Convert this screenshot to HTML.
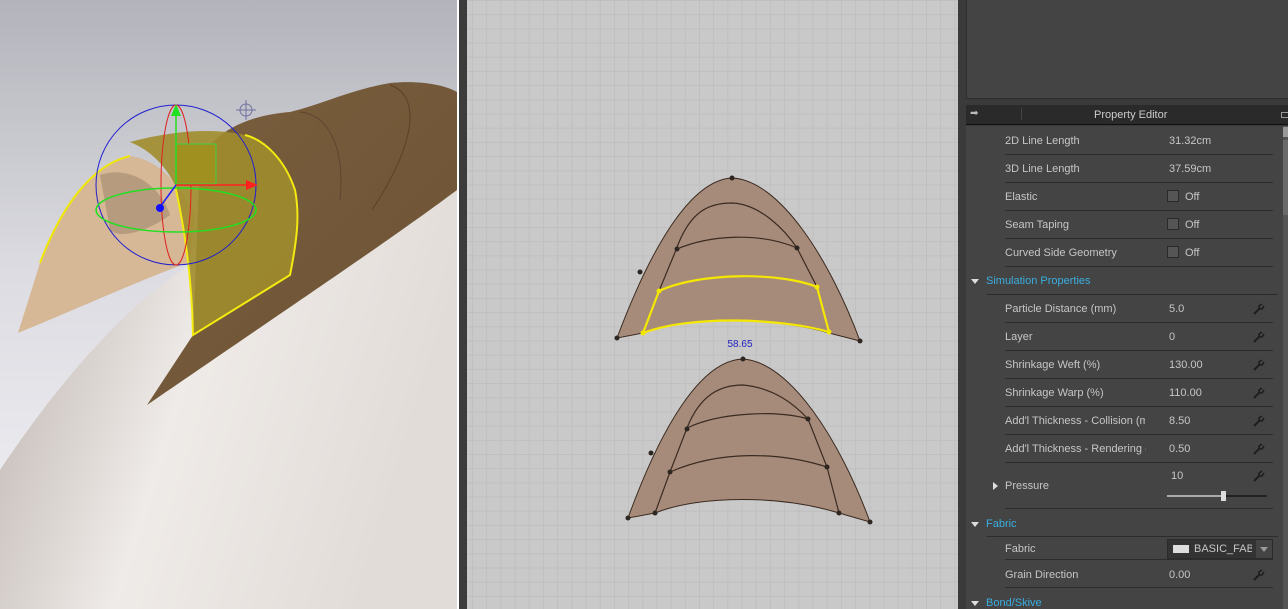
<!DOCTYPE html>
<html><head><meta charset="utf-8"><style>
*{margin:0;padding:0;box-sizing:border-box}
body{width:1288px;height:609px;overflow:hidden;background:#3a3a3a;position:relative;font-family:"Liberation Sans",Tahoma,sans-serif}
.abs{position:absolute}
#v3d{left:0;top:0;width:457px;height:609px}
#grid{left:467px;top:0;width:491px;height:609px;background-color:#c9c9c9;
background-image:linear-gradient(#bfbfbf 1px,transparent 1px),linear-gradient(90deg,#bfbfbf 1px,transparent 1px);background-size:14.2px 14.2px;background-position:5px 0}
.t{position:absolute;font-size:11px;color:#c6c6c6;white-space:nowrap}
.sep{position:absolute;height:1px;background:#2c2c2c}
.cb{position:absolute;width:12px;height:12px;border:1px solid #2a2a2a;background:#555}
.hd{position:absolute;font-size:11px;color:#3aaee0}
.tri{position:absolute;width:0;height:0;border-left:4px solid transparent;border-right:4px solid transparent;border-top:5px solid #ddd}
.w{position:absolute;width:12px;height:12px}
</style></head><body>
<svg width="0" height="0" style="position:absolute"><defs><symbol id="wr" viewBox="0 0 12 12"><path d="M1,11 L7,5" stroke="#1e1e1e" stroke-width="2"/><path d="M6,6 L6,3 L9,1 M6,6 L9,6 L11,3" stroke="#1e1e1e" stroke-width="1.6" fill="none"/></symbol></defs></svg>
<svg id="v3d" class="abs" width="457" height="609" viewBox="0 0 457 609">
<defs>
<linearGradient id="bg" x1="0" y1="0" x2="0" y2="1"><stop offset="0" stop-color="#b3b3bb"/><stop offset="0.45" stop-color="#dcdce2"/><stop offset="1" stop-color="#f3f3f7"/></linearGradient>
<linearGradient id="bd" x1="0" y1="0" x2="1" y2="0.3"><stop offset="0" stop-color="#7e7672"/><stop offset="0.15" stop-color="#c8c0bc"/><stop offset="0.5" stop-color="#efebe8"/><stop offset="1" stop-color="#e2dcd8"/></linearGradient>
<linearGradient id="br" x1="0" y1="0" x2="1" y2="1"><stop offset="0" stop-color="#7a5f3e"/><stop offset="1" stop-color="#6c5234"/></linearGradient>
</defs>
<rect width="457" height="609" fill="url(#bg)"/>
<path d="M0,470 C60,380 130,300 195,262 L457,170 L457,609 L0,609Z" fill="url(#bd)"/>
<path d="M147,405 L193,335 L200,160 C215,130 250,115 290,112 C320,105 350,90 390,83 C420,80 445,85 457,92 L457,190 C390,240 300,300 147,405Z" fill="url(#br)"/>
<path d="M300,112 C330,115 345,150 340,200" stroke="#5e4630" fill="none"/>
<path d="M390,85 C420,95 418,140 372,210" stroke="#5a4228" fill="none" stroke-width="1"/>
<path d="M18,333 L40,263 C60,210 90,165 130,156 C160,160 180,185 195,215 L190,262 C140,280 70,312 18,333Z" fill="#d6b896"/>
<path d="M40,263 C60,210 90,165 130,156" stroke="#f0e800" stroke-width="2" fill="none"/>
<path d="M100,175 C130,165 160,185 170,215 C150,230 120,240 110,230Z" fill="#a88e74" opacity=".7"/>
<path d="M175,185 C185,230 192,280 193,335 L290,275 C297,240 300,215 295,190 C285,160 265,140 245,135 C215,128 175,130 130,142 C150,150 165,165 175,185Z" fill="#a08c2c" opacity=".9"/>
<path d="M175,185 C185,230 192,280 193,335 L290,275 C297,240 300,215 295,190 C285,160 265,140 245,135" stroke="#f2ea10" stroke-width="2" fill="none"/>
<circle cx="176" cy="185" r="80" stroke="#2020d0" fill="none" stroke-width="1"/>
<ellipse cx="176" cy="185" rx="15" ry="80" stroke="#e02020" fill="none" stroke-width="1"/>
<ellipse cx="176" cy="210" rx="80" ry="22" stroke="#20e020" fill="none" stroke-width="1.5"/>
<rect x="176" y="144" width="40" height="40" fill="#a09020" stroke="#40d040"/>
<line x1="176" y1="185" x2="176" y2="112" stroke="#20e020" stroke-width="1.5"/>
<polygon points="176,104 171,116 181,116" fill="#20e020"/>
<line x1="176" y1="185" x2="248" y2="185" stroke="#ff2020" stroke-width="1.5"/>
<polygon points="258,185 246,180 246,190" fill="#ff2020"/>
<line x1="176" y1="185" x2="160" y2="207" stroke="#2020ff" stroke-width="1.5"/>
<circle cx="160" cy="208" r="4" fill="#1010ff"/>
<circle cx="246" cy="110" r="6" stroke="#7070a0" fill="none"/><line x1="246" y1="100" x2="246" y2="120" stroke="#7070a0"/><line x1="236" y1="110" x2="256" y2="110" stroke="#7070a0"/>
</svg>
<div class="abs" style="left:457px;top:0;width:2px;height:609px;background:#fff"></div>
<div class="abs" style="left:459px;top:0;width:8px;height:609px;background:#3c3c3c"></div>
<div id="grid" class="abs"></div>
<svg class="abs" style="left:467px;top:0" width="491" height="609" viewBox="467 0 491 609">
<g fill="#a78b7a" stroke="#3a2a20" stroke-width="1">
<path d="M617,338 C650,250 690,180 732,178 C780,180 830,260 860,341 L829,333 C780,318 690,315 643,333Z"/>
<path d="M628,518 C660,430 700,360 743,359 C790,362 840,440 870,522 L839,513 C780,495 700,495 655,513Z"/>
</g>
<g fill="none" stroke="#3a2a20" stroke-width="1.2">
<path d="M676,250 C690,210 710,203 732,203 C760,204 785,230 797,248 L817,287 L829,333"/>
<path d="M676,250 L659,291 L643,333"/>
<path d="M677,249 C710,235 760,232 797,248"/>
<path d="M687,428 C700,395 720,385 743,385 C775,388 795,405 808,419 L827,467 L839,513"/>
<path d="M687,428 L670,472 L655,513"/>
<path d="M687,428 C720,412 780,410 808,419"/>
<path d="M670,472 C720,450 780,452 827,467"/>
</g>
<path d="M659,291 C700,272 780,272 817,287 L829,332 C780,318 690,315 643,333Z" fill="none" stroke="#f5e800" stroke-width="2.2"/>
<g fill="#2e2620">
<circle cx="732" cy="178" r="2.5"/><circle cx="617" cy="338" r="2.5"/><circle cx="860" cy="341" r="2.5"/><circle cx="640" cy="272" r="2.5"/>
<circle cx="677" cy="249" r="2.5"/><circle cx="797" cy="248" r="2.5"/>
<circle cx="743" cy="359" r="2.5"/><circle cx="628" cy="518" r="2.5"/><circle cx="870" cy="522" r="2.5"/><circle cx="651" cy="453" r="2.5"/>
<circle cx="687" cy="429" r="2.5"/><circle cx="808" cy="419" r="2.5"/><circle cx="670" cy="472" r="2.5"/><circle cx="827" cy="467" r="2.5"/><circle cx="655" cy="513" r="2.5"/><circle cx="839" cy="513" r="2.5"/>
</g>
<g fill="#f5e800"><circle cx="659" cy="291" r="2.5"/><circle cx="817" cy="287" r="2.5"/><circle cx="643" cy="333" r="2.5"/><circle cx="829" cy="332" r="2.5"/></g>
<text x="740" y="347" font-family="Liberation Sans" font-size="10" fill="#2020c0" text-anchor="middle">58.65</text>
</svg>
<div class="abs" style="left:958px;top:0;width:8px;height:609px;background:#3a3a3a"></div>
<div class="abs" style="left:966px;top:0;width:322px;height:99px;background:#444;border-left:1px solid #2e2e2e;border-bottom:1px solid #2e2e2e"></div>
<div class="abs" style="left:966px;top:105px;width:322px;height:20px;background:#2a2a2a;border-bottom:1px solid #111"></div>
<div class="t" style="left:970px;top:108px;color:#bbb;font-size:10px">➡</div>
<div class="abs" style="left:1021px;top:108px;width:1px;height:12px;background:#444"></div>
<div class="t" style="left:1094px;top:109px;color:#ccc">Property Editor</div>
<div class="abs" style="left:1281px;top:112px;width:8px;height:6px;border:1px solid #999"></div>
<div class="abs" style="left:966px;top:126px;width:317px;height:483px;background:#444"></div>
<div class="abs" style="left:1283px;top:126px;width:5px;height:483px;background:#555"></div>
<div class="abs" style="left:1283px;top:127px;width:5px;height:10px;background:#999"></div>
<div class="abs" style="left:1283px;top:140px;width:5px;height:75px;background:#6a6a6a"></div>

<div class="t" style="left:1005px;top:135px">2D Line Length</div><div class="t" style="left:1169px;top:135px">31.32cm</div><div class="sep" style="left:1005px;top:154px;width:268px"></div>
<div class="t" style="left:1005px;top:163px">3D Line Length</div><div class="t" style="left:1169px;top:163px">37.59cm</div><div class="sep" style="left:1005px;top:182px;width:268px"></div>
<div class="t" style="left:1005px;top:191px">Elastic</div><div class="cb" style="left:1167px;top:190px"></div><div class="t" style="left:1185px;top:191px">Off</div><div class="sep" style="left:1005px;top:210px;width:268px"></div>
<div class="t" style="left:1005px;top:219px">Seam Taping</div><div class="cb" style="left:1167px;top:218px"></div><div class="t" style="left:1185px;top:219px">Off</div><div class="sep" style="left:1005px;top:238px;width:268px"></div>
<div class="t" style="left:1005px;top:247px">Curved Side Geometry</div><div class="cb" style="left:1167px;top:246px"></div><div class="t" style="left:1185px;top:247px">Off</div><div class="sep" style="left:1005px;top:266px;width:268px"></div>
<div class="tri" style="left:971px;top:279px"></div><div class="hd" style="left:986px;top:275px">Simulation Properties</div><div class="sep" style="left:987px;top:294px;width:291px"></div>
<div class="t" style="left:1005px;top:303px">Particle Distance (mm)</div><div class="t" style="left:1169px;top:303px">5.0</div><svg class="w" style="left:1253px;top:303px"><use href="#wr"/></svg><div class="sep" style="left:1005px;top:322px;width:268px"></div>
<div class="t" style="left:1005px;top:331px">Layer</div><div class="t" style="left:1169px;top:331px">0</div><svg class="w" style="left:1253px;top:331px"><use href="#wr"/></svg><div class="sep" style="left:1005px;top:350px;width:268px"></div>
<div class="t" style="left:1005px;top:359px">Shrinkage Weft (%)</div><div class="t" style="left:1169px;top:359px">130.00</div><svg class="w" style="left:1253px;top:359px"><use href="#wr"/></svg><div class="sep" style="left:1005px;top:378px;width:268px"></div>
<div class="t" style="left:1005px;top:387px">Shrinkage Warp (%)</div><div class="t" style="left:1169px;top:387px">110.00</div><svg class="w" style="left:1253px;top:387px"><use href="#wr"/></svg><div class="sep" style="left:1005px;top:406px;width:268px"></div>
<div class="t" style="left:1005px;top:415px;width:140px;overflow:hidden">Add'l Thickness - Collision (mm)</div><div class="t" style="left:1169px;top:415px">8.50</div><svg class="w" style="left:1253px;top:415px"><use href="#wr"/></svg><div class="sep" style="left:1005px;top:434px;width:268px"></div>
<div class="t" style="left:1005px;top:443px;width:141px;overflow:hidden">Add'l Thickness - Rendering (mm)</div><div class="t" style="left:1169px;top:443px">0.50</div><svg class="w" style="left:1253px;top:443px"><use href="#wr"/></svg><div class="sep" style="left:1005px;top:462px;width:268px"></div>
<div class="abs" style="left:993px;top:482px;border-top:4px solid transparent;border-bottom:4px solid transparent;border-left:5px solid #ddd"></div>
<div class="t" style="left:1005px;top:480px">Pressure</div><div class="t" style="left:1171px;top:470px">10</div><svg class="w" style="left:1253px;top:470px"><use href="#wr"/></svg>
<div class="abs" style="left:1167px;top:495px;width:100px;height:2px;background:#222"></div><div class="abs" style="left:1167px;top:495px;width:57px;height:2px;background:#aaa"></div>
<div class="abs" style="left:1221px;top:491px;width:5px;height:10px;background:#ddd"></div>
<div class="sep" style="left:1005px;top:508px;width:268px"></div>
<div class="tri" style="left:971px;top:522px"></div><div class="hd" style="left:986px;top:518px">Fabric</div><div class="sep" style="left:987px;top:536px;width:291px"></div>
<div class="t" style="left:1005px;top:543px">Fabric</div>
<div class="abs" style="left:1167px;top:539px;width:106px;height:20px;background:#333;border:1px solid #2a2a2a"></div>
<div class="abs" style="left:1173px;top:545px;width:16px;height:8px;background:#ddd"></div>
<div class="t" style="left:1194px;top:543px;width:58px;overflow:hidden">BASIC_FABRIC</div>
<div class="abs" style="left:1256px;top:540px;width:16px;height:18px;background:#444"></div><div class="tri" style="left:1260px;top:547px;border-top-color:#999"></div>
<div class="sep" style="left:1005px;top:559px;width:268px"></div>
<div class="t" style="left:1005px;top:569px">Grain Direction</div><div class="t" style="left:1169px;top:569px">0.00</div><svg class="w" style="left:1253px;top:569px"><use href="#wr"/></svg><div class="sep" style="left:1005px;top:587px;width:268px"></div>
<div class="tri" style="left:971px;top:601px"></div><div class="hd" style="left:986px;top:597px">Bond/Skive</div>
</body></html>
